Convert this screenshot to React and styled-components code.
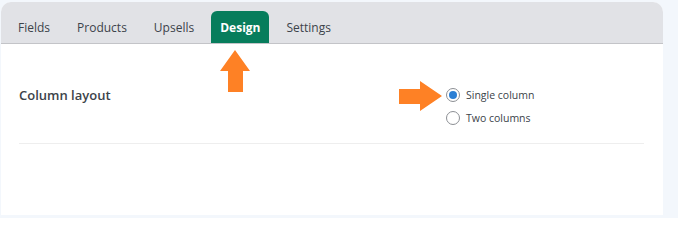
import React from "react"
import styled, { createGlobalStyle } from "styled-components"

const GlobalStyle = createGlobalStyle`
  body {
    margin: 0;
    background: #ffffff;
    font-family: "Open Sans", "Noto Sans", sans-serif;
  }
`

const tabs = ["Fields", "Products", "Upsells", "Design", "Settings"]

const UpArrow = () => (
  <svg width="30" height="42" viewBox="0 0 30 42">
    <polygon points="15,0 30,21 23,21 23,42 8,42 8,21 0,21" fill="#fe8125" />
  </svg>
)

const RightArrow = () => (
  <svg width="43" height="30" viewBox="0 0 43 30">
    <polygon points="0,8 21,8 21,0 43,15 21,30 21,23 0,23" fill="#fe8125" />
  </svg>
)

const App = () => {
  return (
    <Page>
      <GlobalStyle />
      <Card>
        <TabBar>
          {tabs.map((t) => (
            <Tab key={t} active={t === "Design"}>
              {t}
            </Tab>
          ))}
        </TabBar>
        <Content>
          <Row>
            <Label>Column layout</Label>
            <Options>
              <Option>
                <Radio checked />
                Single column
              </Option>
              <Option>
                <Radio />
                Two columns
              </Option>
            </Options>
          </Row>
        </Content>
        <ArrowUp>
          <UpArrow />
        </ArrowUp>
        <ArrowRight>
          <RightArrow />
        </ArrowRight>
      </Card>
    </Page>
  )
}

const Page = styled.div`
  background: #f3f7fc;
  padding: 2px 15px 3px 1px;
`

const Card = styled.div`
  position: relative;
  height: 213px;
  background: #ffffff;
  border-radius: 10px 10px 0 0;
  overflow: hidden;
`

const TabBar = styled.div`
  display: flex;
  align-items: flex-end;
  gap: 7px;
  height: 41px;
  padding-left: 7px;
  background: #e1e2e6;
  border-bottom: 1px solid #c3c4c8;
`

const Tab = styled.div`
  display: flex;
  align-items: center;
  height: 32px;
  padding: 0 ${(p) => (p.active ? 9 : 10)}px;
  border-radius: 6px 6px 0 0;
  font-size: 12px;
  font-weight: ${(p) => (p.active ? 700 : 500)};
  color: ${(p) => (p.active ? "#ffffff" : "#3c434a")};
  background: ${(p) => (p.active ? "#077d5c" : "transparent")};
`

const Content = styled.div`
  padding: 0 19px 0 18px;
`

const Row = styled.div`
  display: grid;
  grid-template-columns: 427px 1fr;
  padding: 41px 0 15px;
  border-bottom: 1px solid #eeeeee;
`

const Label = styled.div`
  height: 20px;
  line-height: 20px;
  font-size: 13px;
  font-weight: 600;
  color: #3c434a;
`

const Options = styled.div`
  display: flex;
  flex-direction: column;
  gap: 3px;
`

const Option = styled.label`
  display: flex;
  align-items: center;
  gap: 6px;
  height: 20px;
  font-size: 10.5px;
  color: #3c434a;
`

const Radio = styled.span`
  position: relative;
  box-sizing: border-box;
  width: 14px;
  height: 14px;
  border-radius: 50%;
  border: 1px solid #8c8f94;
  background: #ffffff;
  &::after {
    content: "";
    display: ${(p) => (p.checked ? "block" : "none")};
    position: absolute;
    inset: 2px;
    border-radius: 50%;
    background: #2b7fd4;
  }
`

const ArrowUp = styled.div`
  position: absolute;
  left: 219px;
  top: 48px;
  line-height: 0;
`

const ArrowRight = styled.div`
  position: absolute;
  left: 398px;
  top: 79px;
  line-height: 0;
`

export default App
